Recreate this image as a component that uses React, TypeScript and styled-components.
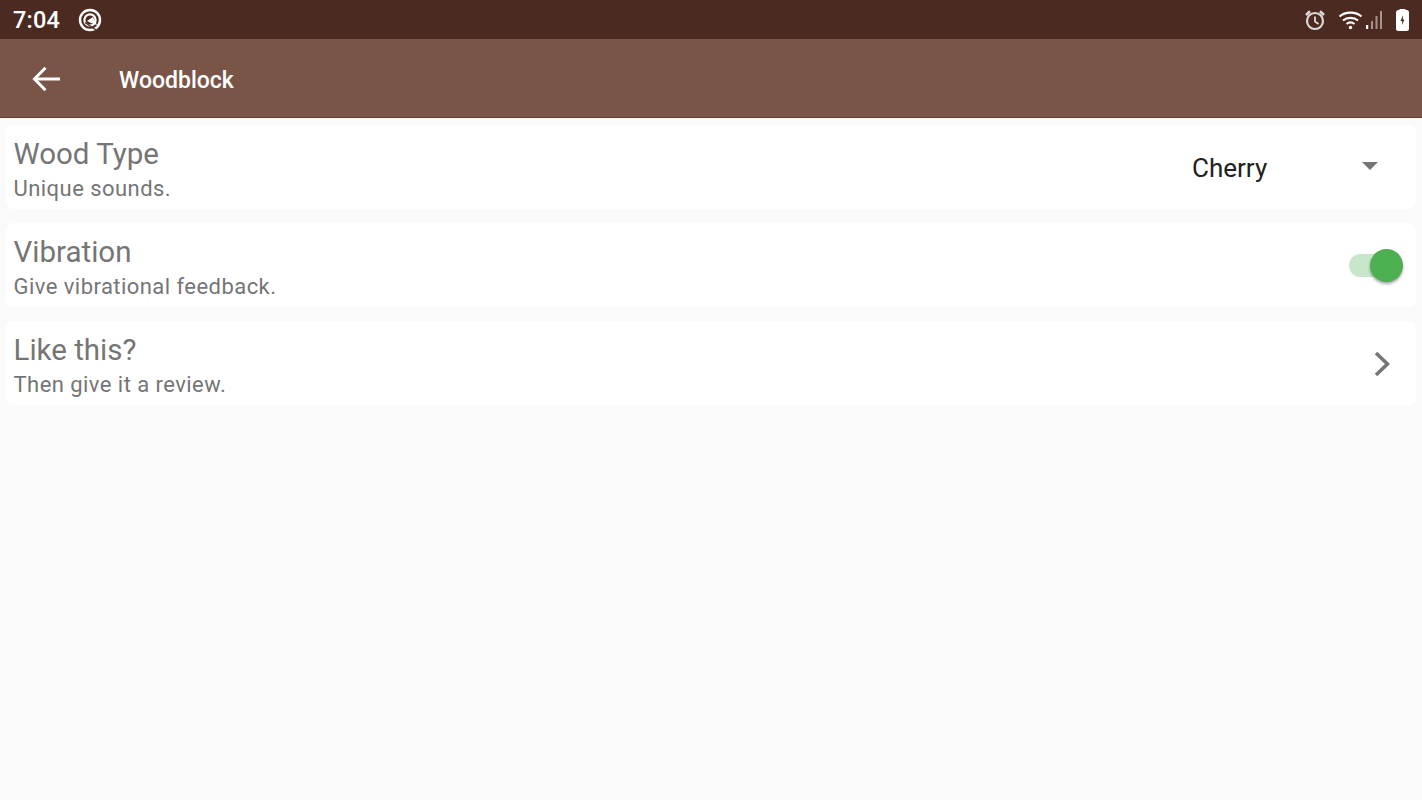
import React from "react";
import styled, { createGlobalStyle } from "styled-components";

const Global = createGlobalStyle`
  html, body { margin: 0; padding: 0; background: #fafafa; }
  body { font-family: Roboto, "Liberation Sans", sans-serif; }
`;

const Page = styled.div`
  width: 1422px;
  height: 800px;
  display: flex;
  flex-direction: column;
  background: #fafafa;
  overflow: hidden;
`;

const StatusBar = styled.div`
  height: 39px;
  flex: none;
  background: #4b2b21;
  display: flex;
  align-items: center;
  padding: 0 13px;
  color: #fff;
`;

const Clock = styled.span`
  font-size: 23.5px;
  font-weight: 500;
  line-height: 39px;
  letter-spacing: 0.2px;
  margin-top: 1px;
`;

const StatusLeft = styled.div`
  display: flex;
  align-items: center;
  gap: 18px;
`;

const StatusRight = styled.div`
  margin-left: auto;
  display: flex;
  align-items: center;
`;

const Toolbar = styled.div`
  height: 79px;
  flex: none;
  background: #795548;
  border-bottom: 1px solid #5f3d31;
  box-sizing: border-box;
  display: flex;
  align-items: center;
  padding-left: 30px;
  gap: 57px;
`;

const BackIcon = styled.svg`
  display: block;
  margin-top: 2px;
`;

const Title = styled.h1`
  margin: 4px 0 0;
  font-size: 23px;
  font-weight: 500;
  color: #fff;
  letter-spacing: 0;
`;

const List = styled.div`
  display: flex;
  flex-direction: column;
  gap: 14px;
  padding: 7px 6px 0;
`;

const Card = styled.div`
  height: 84px;
  background: #fff;
  border-radius: 7px;
  display: flex;
  align-items: center;
  padding: 0 8px;
  box-sizing: border-box;
`;

const Texts = styled.div`
  display: flex;
  flex-direction: column;
  flex: 1;
  gap: 5px;
  margin-left: -0.5px;
  margin-top: 4px;
`;

const CardTitle = styled.div`
  font-size: 29.5px;
  line-height: 33px;
  color: #757575;
`;

const CardSub = styled.div`
  font-size: 22px;
  line-height: 25px;
  color: #757575;
  letter-spacing: 0.45px;
`;

const Select = styled.div`
  width: 216px;
  display: flex;
  align-items: center;
  justify-content: space-between;
  padding-right: 30px;
  box-sizing: border-box;
`;

const SelectValue = styled.span`
  font-size: 26px;
  margin-top: 1px;
  color: #212121;
`;

const Caret = styled.svg`
  display: block;
  margin-top: -3px;
`;

const Switch = styled.div`
  position: relative;
  width: 54px;
  height: 34px;
  margin-right: 5px;
  margin-top: 1px;
  display: flex;
  align-items: center;
`;

const Track = styled.div`
  width: 48px;
  height: 23px;
  border-radius: 12px;
  background: #c8e6c9;
  margin-top: -1px;
`;

const Thumb = styled.div`
  position: absolute;
  right: 0;
  top: 0;
  width: 33px;
  height: 33px;
  border-radius: 50%;
  background: #4caf50;
  box-shadow: 0 2px 3px rgba(0, 0, 0, 0.35);
`;

const Chevron = styled.svg`
  display: block;
  margin-right: 18px;
  margin-top: 1px;
`;

const Icon = styled.svg`
  display: block;
`;

const AlarmIcon = styled(Icon)`
  margin-right: 11px;
`;

const SignalIcon = styled(Icon)`
  margin-left: 2px;
  margin-right: 13px;
`;

export default function App() {
  return (
    <Page>
      <Global />
      <StatusBar>
        <StatusLeft>
          <Clock>7:04</Clock>
          <Icon width="24" height="24" viewBox="0 0 24 24" fill="none">
            <circle cx="12" cy="12" r="10" stroke="#fff" strokeWidth="2.4" />
            <circle cx="12" cy="12" r="5.6" stroke="#fff" strokeWidth="2.2" />
            <path d="M9 13 L15 9 L19 17 L13 15 Z" fill="#fff" />
            <path d="M7 14.5 L18 22" stroke="#4b2b21" strokeWidth="1.4" />
          </Icon>
        </StatusLeft>
        <StatusRight>
          <AlarmIcon width="24" height="24" viewBox="0 0 24 24" fill="none" stroke="#ded8d6" strokeWidth="2.2">
            <circle cx="12" cy="13" r="8" />
            <path d="M12 8.5 V13.5 L15.5 16" strokeWidth="1.8" />
            <path d="M3 7 L7 3.2 M21 7 L17 3.2" strokeWidth="2.6" />
          </AlarmIcon>
          <Icon width="25" height="20" viewBox="0 0 25 20" fill="none" stroke="#fff" strokeWidth="2.2">
            <path d="M1.5 6.5 C7 1.2 18 1.2 23.5 6.5" />
            <path d="M5 10.5 C9 7 16 7 20 10.5" />
            <path d="M8.5 14 C10.8 12.2 14.2 12.2 16.5 14" />
            <circle cx="12.5" cy="17.5" r="1.7" fill="#fff" stroke="none" />
          </Icon>
          <SignalIcon width="18" height="20" viewBox="0 0 18 20" fill="#a8948e">
            <rect x="1" y="15" width="2.2" height="4" fill="#fff" />
            <rect x="6" y="11" width="2" height="8" />
            <rect x="10.5" y="6" width="2" height="13" />
            <rect x="15" y="1" width="2" height="18" />
          </SignalIcon>
          <Icon width="13" height="22" viewBox="0 0 13 22">
            <rect x="0" y="1" width="13" height="21" rx="2.5" fill="#fff" />
            <rect x="3.5" y="0" width="6" height="2" fill="#fff" />
            <path d="M7 6 L4.5 12 H6.2 L6 16 L8.5 10.5 H6.8 Z" fill="#4b2b21" />
          </Icon>
        </StatusRight>
      </StatusBar>
      <Toolbar>
        <BackIcon width="32" height="32" viewBox="0 0 32 32" fill="none" stroke="#fff" strokeWidth="3">
          <path d="M30 16 H5" />
          <path d="M15.5 4.8 L4.5 16 L15.5 27.2" />
        </BackIcon>
        <Title>Woodblock</Title>
      </Toolbar>
      <List>
        <Card>
          <Texts>
            <CardTitle>Wood Type</CardTitle>
            <CardSub>Unique sounds.</CardSub>
          </Texts>
          <Select>
            <SelectValue>Cherry</SelectValue>
            <Caret width="16" height="8" viewBox="0 0 16 8">
              <path d="M0 0 H16 L8 8 Z" fill="#757575" />
            </Caret>
          </Select>
        </Card>
        <Card>
          <Texts>
            <CardTitle>Vibration</CardTitle>
            <CardSub>Give vibrational feedback.</CardSub>
          </Texts>
          <Switch>
            <Track />
            <Thumb />
          </Switch>
        </Card>
        <Card>
          <Texts>
            <CardTitle>Like this?</CardTitle>
            <CardSub>Then give it a review.</CardSub>
          </Texts>
          <Chevron width="16" height="26" viewBox="0 0 16 26" fill="none" stroke="#757575" strokeWidth="3.6">
            <path d="M2 2 L13.5 13 L2 24" />
          </Chevron>
        </Card>
      </List>
    </Page>
  );
}
